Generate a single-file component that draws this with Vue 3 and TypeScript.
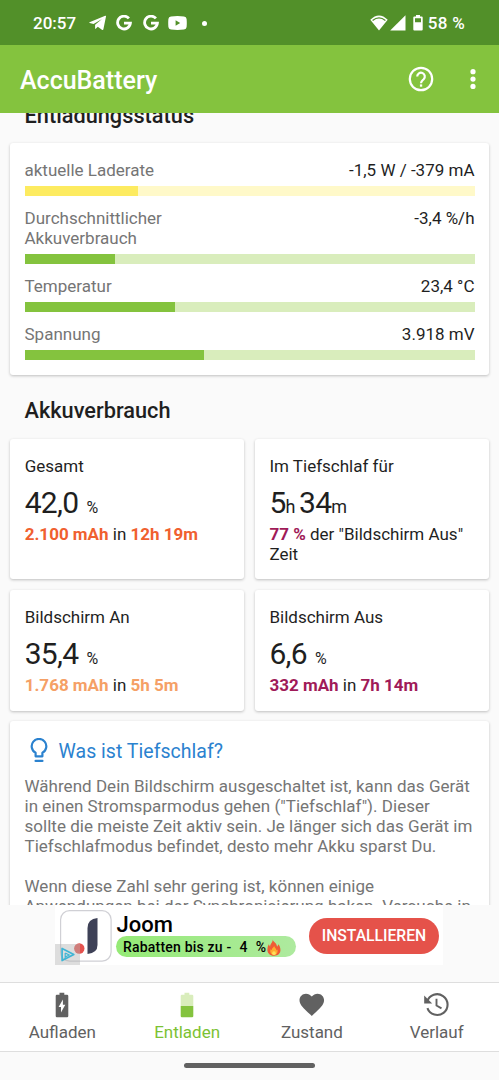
<script setup lang="ts">
interface Metric {
  label: string
  value: string
  percent: number
  tone: 'yellow' | 'green'
}

interface Part {
  text: string
  kind?: 'unit' | 'percent'
}

interface Usage {
  title: string
  parts: Part[]
  strong: string
  middle: string
  strongEnd?: string
  color: string
}

const metrics: Metric[] = [
  { label: 'aktuelle Laderate', value: '-1,5 W / -379 mA', percent: 25.3, tone: 'yellow' },
  { label: 'Durchschnittlicher Akkuverbrauch', value: '-3,4 %/h', percent: 20.1, tone: 'green' },
  { label: 'Temperatur', value: '23,4 °C', percent: 33.5, tone: 'green' },
  { label: 'Spannung', value: '3.918 mV', percent: 39.8, tone: 'green' },
]

const usages: Usage[] = [
  { title: 'Gesamt', parts: [{ text: '42,0' }, { text: '%', kind: 'percent' }], strong: '2.100 mAh', middle: ' in ', strongEnd: '12h 19m', color: 'orange' },
  { title: 'Im Tiefschlaf für', parts: [{ text: '5' }, { text: 'h ', kind: 'unit' }, { text: '34' }, { text: 'm', kind: 'unit' }], strong: '77 %', middle: ' der "Bildschirm Aus" Zeit', color: 'plum' },
  { title: 'Bildschirm An', parts: [{ text: '35,4' }, { text: '%', kind: 'percent' }], strong: '1.768 mAh', middle: ' in ', strongEnd: '5h 5m', color: 'peach' },
  { title: 'Bildschirm Aus', parts: [{ text: '6,6' }, { text: '%', kind: 'percent' }], strong: '332 mAh', middle: ' in ', strongEnd: '7h 14m', color: 'plum' },
]
</script>

<template>
  <div class="screen">
    <div class="status">
      <span class="clock">20:57</span>
      <svg class="telegram" width="18" height="16" viewBox="0 0 18 16"><path d="M.5 7.2 16.2.7q1-.3.8.8l-2.6 12.700q-.3 1.300-1.500.5L8.800 11.800l-2.100 2q-.5.5-.6-.5V9.800L13 4 4.600 9.100.7 8q-.9-.3-.2-.8Z" fill="#fff" /></svg>
      <svg v-for="n in 2" :key="n" class="google" width="16" height="16" viewBox="0 0 16 16"><path d="M12.900 3.400A6.400 6.400 0 1 0 14.400 8.200H8" fill="none" stroke="#fff" stroke-width="2.800" /></svg>
      <svg class="youtube" width="19" height="14" viewBox="0 0 19 14"><path fill-rule="evenodd" d="M3 .4Q9.500-.2 16 .4q2.400.2 2.600 2.600.4 4 0 8-.2 2.400-2.600 2.600-6.500.6-13 0Q.600 13.400.400 11 0 7 .400 3 .600.600 3 .400ZM7.600 4.300v5.400l4.600-2.700Z" fill="#fff" /></svg>
      <i class="dot"></i>
      <svg class="wifi" width="18" height="16" viewBox="0 0 18 16"><path d="M9 15.500.300 4.800Q9-3.800 17.700 4.800Z" fill="#fff" /><path d="M2.600 5.400Q9 .300 15.400 5.400" fill="none" stroke="#529029" stroke-width="1.300" /></svg>
      <svg class="signal" width="16" height="16" viewBox="0 0 16 16"><path d="M15.500.2v15.300H.200Z" fill="#fff" /></svg>
      <svg class="cell" width="10" height="16" viewBox="0 0 10 16"><path fill-rule="evenodd" d="M3 0h4v1.500h1.700q1 0 1 1v12q0 1-1 1H1.300q-1 0-1-1v-12q0-1 1-1H3ZM2 3.300v4h6v-4Z" fill="#fff" /></svg>
      <span class="charge">58 %</span>
    </div>

    <header class="appbar">
      <h1>AccuBattery</h1>
      <svg class="help" width="26" height="26" viewBox="0 0 26 26"><circle cx="13" cy="13" r="11.200" fill="none" stroke="#fff" stroke-width="2.200" /><path d="M9.200 10.500a3.800 3.800 0 1 1 6.500 2.700C14.300 14.500 13 15.300 13 17.200" fill="none" stroke="#fff" stroke-width="2.200" /><path d="M11.900 18.400h2.300v2.300h-2.300Z" fill="#fff" /></svg>
      <svg class="more" width="6" height="22" viewBox="0 0 6 22"><g fill="#fff"><circle cx="3" cy="3.700" r="2.600" /><circle cx="3" cy="11.100" r="2.600" /><circle cx="3" cy="18.400" r="2.600" /></g></svg>
    </header>

    <main class="content">
      <h2 class="first">Entladungsstatus</h2>
      <section class="card metrics">
        <div v-for="m in metrics" :key="m.label" :class="['metric', m.tone]">
          <div class="line"><span class="label">{{ m.label }}</span><span>{{ m.value }}</span></div>
          <div class="track"><div class="fill" :style="{ width: m.percent + '%' }"></div></div>
        </div>
      </section>
      <h2>Akkuverbrauch</h2>
      <section class="usages">
        <article v-for="u in usages" :key="u.title" :class="['card', 'usage', u.color]">
          <h3>{{ u.title }}</h3>
          <div class="big"><span v-for="(p, i) in u.parts" :key="i" :class="p.kind">{{ p.text }}</span></div>
          <p><b>{{ u.strong }}</b>{{ u.middle }}<b v-if="u.strongEnd">{{ u.strongEnd }}</b></p>
        </article>
      </section>
      <section class="card info">
        <div class="info-title">
          <svg width="18" height="25" viewBox="0 0 18 25"><path d="M5.600 18.300v-3.600A7.300 7.300 0 1 1 12.400 14.700v3.600Z" fill="none" stroke="#2b82cf" stroke-width="2.200" stroke-linejoin="round" /><path d="M5.600 22.900h6.800" stroke="#2b82cf" stroke-width="2.300" stroke-linecap="round" /></svg>
          <span>Was ist Tiefschlaf?</span>
        </div>
        <p>Während Dein Bildschirm ausgeschaltet ist, kann das Gerät<br />in einen Stromsparmodus gehen ("Tiefschlaf"). Dieser<br />sollte die meiste Zeit aktiv sein. Je länger sich das Gerät im<br />Tiefschlafmodus befindet, desto mehr Akku sparst Du.</p>
        <p>Wenn diese Zahl sehr gering ist, können einige<br />Anwendungen bei der Synchronisierung haken. Versuche in</p>
      </section>
    </main>

    <aside class="ad">
      <div class="banner">
        <div class="logo">
          <svg width="52" height="52" viewBox="0 0 52 52"><rect x=".6" y=".6" width="50.500" height="50.500" rx="9" fill="#fff" stroke="#d0d0d5" stroke-width="1.200" /><path d="M37.500 8v27q0 8-10 9V18q0-9 10-10Z" fill="#3e4157" /><circle cx="19.300" cy="38.500" r="5.200" fill="#e5524e" /></svg>
          <div class="choices"><svg width="14" height="15" viewBox="0 0 14 15"><path d="M1.100 1.400v12.200L12.800 7.500Z" fill="none" stroke="#3fb5d5" stroke-width="1.700" stroke-linejoin="round" /><path d="M4.200 6v6M4.200 6l4 2-4 2" fill="none" stroke="#3fb5d5" stroke-width="1.200" /></svg></div>
        </div>
        <div class="offer">
          <div class="brand">Joom</div>
          <div class="pill">
            <span>Rabatten bis zu -</span><span>4</span><span>%</span>
            <svg width="14" height="17" viewBox="0 0 14 17"><path d="M5.500.3c.5 2.500 4.300 3.600 4.600 7.500l1.500-2.500c3.200 5 2.600 11.200-4.500 11.400C.1 16.500-1 10.300 1.800 5.300l1.300 2.500C3 4.200 6.300 3.400 5.500.3Z" fill="#ef5b35" /><path d="M7.200 6.500c-.2 2.300 2.500 3 2.200 5l1-1c.8 3-.7 5.400-3.300 5.400S2.500 13.400 3.600 10.300l1 1C4.800 9 7.200 8.400 7.200 6.500Z" fill="#ffad2f" /><ellipse cx="7" cy="14.200" rx="1.800" ry="1.900" fill="#ffe05b" /></svg>
          </div>
        </div>
        <div class="install">INSTALLIEREN</div>
      </div>
    </aside>

    <nav class="tabs">
      <div class="tab">
        <svg width="26" height="26" viewBox="0 0 26 26"><path d="M10.500.8h4.800v2h2.800q1.200 0 1.200 1.200v20q0 1.200-1.200 1.200H7.900Q6.700 25.200 6.700 24V4q0-1.200 1.200-1.200h2.600Z" fill="#616161" /><path d="M13.900 7.500v5.300h2.400L12 20.500v-5.400H9.600Z" fill="#fff" /></svg>
        <span>Aufladen</span>
      </div>
      <div class="tab active">
        <svg width="26" height="26" viewBox="0 0 26 26"><path d="M10.500.8h4.800v2h2.800q1.200 0 1.200 1.200v10H6.700V4q0-1.200 1.200-1.200h2.600Z" fill="#d9edbc" /><path d="M6.700 13.900h12.600V24q0 1.200-1.200 1.200H7.900Q6.700 25.200 6.700 24Z" fill="#84c33e" /></svg>
        <span>Entladen</span>
      </div>
      <div class="tab">
        <svg width="26" height="26" viewBox="0 0 26 26"><path transform="translate(.3 -.5) scale(1.040 1.060)" d="m12 23.100-1.700-1.600C4.300 16 .2 12.500.2 8.200.2 4.800 3 2.100 6.400 2.100c2.200 0 4.200 1 5.600 2.700 1.400-1.700 3.400-2.700 5.600-2.700 3.400 0 6.200 2.700 6.200 6.100 0 4.300-4.100 7.800-10.100 13.300Z" fill="#616161" /></svg>
        <span>Zustand</span>
      </div>
      <div class="tab">
        <svg width="26" height="26" viewBox="0 0 26 26"><path d="M3.200 9.600A10.400 10.400 0 1 1 3.400 16.200" fill="none" stroke="#616161" stroke-width="2.100" /><path d="M.2 3.600v7.800h8Z" fill="#616161" /><path d="M12.500 6.800v6.700l5 2.900" fill="none" stroke="#616161" stroke-width="1.900" /></svg>
        <span>Verlauf</span>
      </div>
    </nav>
    <div class="gesture"><i></i></div>
  </div>
</template>

<style>
body { margin: 0; background: #fafafa; }
</style>

<style scoped>
.screen { width: 499px; height: 1080px; display: flex; flex-direction: column; overflow: hidden; background: #fafafa; color: #1f1f1f; font: 17px/20px Roboto, sans-serif; }
h1, h2, h3, p { margin: 0; font-weight: 400; }
svg { display: block; flex: none; }
.status { height: 45px; box-sizing: border-box; padding: 1px 34px 0 33px; display: flex; align-items: center; background: #529029; color: #fff; flex: none; font-weight: 500; }
.clock { width: 56px; font-size: 17px; }
.google { margin-left: 9px; }
.google + .google { margin-left: 11px; }
.youtube { margin-left: 9px; }
.dot { width: 5px; height: 5px; border-radius: 50%; background: #fff; margin-left: 15px; }
.wifi { margin-left: auto; }
.signal { margin-left: 2px; }
.cell { margin-left: 7px; }
.charge { margin-left: 5px; white-space: nowrap; letter-spacing: .3px; }
.appbar { height: 68px; flex: none; display: flex; align-items: center; box-sizing: border-box; padding: 0 23.500px 0 20px; background: #84c33e; color: #fff; }
.appbar h1 { font-size: 25px; line-height: 30px; font-weight: 500; padding-top: 3px; }
.help { margin-left: auto; }
.more { margin-left: 35.500px; }
.content { flex: 1; min-height: 0; overflow: hidden; padding: 0 10px; }
h2 { font-size: 21.750px; line-height: 24px; font-weight: 500; margin: 24px 0 16px 14.500px; }
h2.first { margin: -9px 0 15px 14.500px; }
.card { background: #fff; border-radius: 3px; box-shadow: 0 1px 3px rgba(0, 0, 0, .24); box-sizing: border-box; }
.metrics { height: 232px; padding: 17px 14.500px 15px; display: flex; flex-direction: column; gap: 12px; }
.line { display: flex; justify-content: space-between; margin-bottom: 6px; }
.label { max-width: 150px; color: #757575; }
.track { height: 10px; background: #d9edbc; }
.fill { height: 100%; background: #84c33e; }
.yellow .track { background: #fff9c9; }
.yellow .fill { background: #fdeb60; }
.usages { display: grid; grid-template-columns: 1fr 1fr; grid-template-rows: 140px 121px; gap: 11px 10.500px; margin-bottom: 10px; }
.usage { padding: 17px 14.700px 0; }
.usage h3 { font-size: 17px; }
.big { font-size: 30px; line-height: 35px; height: 39px; margin: 9px 0 0; white-space: pre; letter-spacing: -.7px; }
.unit { font-size: 18px; letter-spacing: -.5px; }
.percent { font-size: 16px; margin-left: 8px; }
b { font-weight: 700; }
.orange b { color: #f0602f; }
.plum b { color: #a01a58; }
.peach b { color: #f5a066; }
.info { padding: 18px 0 0 14.500px; height: 300px; color: #757575; white-space: nowrap; letter-spacing: .025px; }
.info-title { display: flex; align-items: center; height: 25px; gap: 11px; padding-left: 5px; margin-bottom: 12px; color: #2b82cf; font-size: 19.500px; }
.info-title svg { margin-top: -3px; }
.info p + p { margin-top: 20px; }
.ad { height: 77px; flex: none; padding-left: 55px; background: #fafafa; }
.banner { width: 388px; height: 60px; background: #fff; display: flex; }
.logo { position: relative; width: 61px; padding: 5px 0 0 5px; box-sizing: border-box; }
.choices { position: absolute; left: 0; bottom: 0; width: 25px; height: 21px; background: rgba(180, 180, 180, .45); display: flex; align-items: center; justify-content: center; }
.offer { width: 180px; color: #000; font-weight: 500; }
.brand { font-size: 22px; line-height: 24px; height: 23px; padding-left: .5px; margin-top: 8px; }
.pill { height: 21px; line-height: 17px; border-radius: 11px; background: linear-gradient(90deg, #95ea76, #aeea9f); font-size: 14px; letter-spacing: .2px; display: flex; align-items: center; padding: 1px 0 0 7px; box-sizing: border-box; white-space: nowrap; }
.pill span + span { margin-left: 8px; }
.pill svg { margin-left: 1px; }
.install { width: 130px; height: 36px; margin: 13px 0 0 13px; border-radius: 18px; background: #e5524a; color: #fff; font-size: 15.700px; font-weight: 500; line-height: 36px; text-align: center; }
.tabs { height: 70px; box-sizing: border-box; flex: none; display: grid; grid-template-columns: repeat(4, 1fr); background: #fff; border-top: 1px solid #dedede; border-bottom: 1px solid #dedede; }
.tab { display: flex; flex-direction: column; align-items: center; padding-top: 9px; color: #616161; gap: 4px; }
.active { color: #7cc233; }
.gesture { height: 28px; flex: none; display: flex; justify-content: center; padding-top: 11px; box-sizing: border-box; }
.gesture i { width: 131px; height: 5px; border-radius: 3px; background: #616161; }
</style>
